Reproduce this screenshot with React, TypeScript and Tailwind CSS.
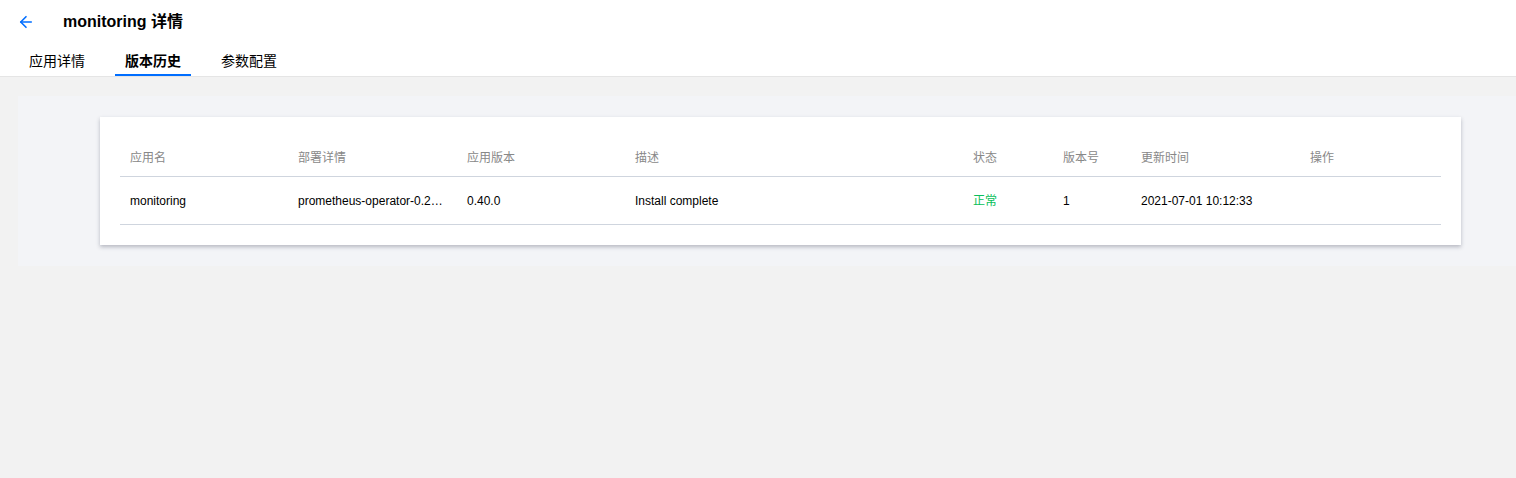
import { ArrowLeft } from "lucide-react";

const columns = [
  { key: "name", label: "应用名", width: "w-[168px]" },
  { key: "deploy", label: "部署详情", width: "w-[169px]" },
  { key: "version", label: "应用版本", width: "w-[168px]" },
  { key: "desc", label: "描述", width: "w-[338px]" },
  { key: "status", label: "状态", width: "w-[90px]" },
  { key: "rev", label: "版本号", width: "w-[78px]" },
  { key: "time", label: "更新时间", width: "w-[169px]" },
  { key: "ops", label: "操作", width: "" },
];

const tabs = ["应用详情", "版本历史", "参数配置"];

export default function App() {
  return (
    <div
      className="min-h-[478px] bg-[#f2f2f2] text-[#000]"
      style={{ fontFamily: '"Liberation Sans", "Noto Sans CJK SC", sans-serif' }}
    >
      <header className="bg-white border-b border-[#e5e5e5]">
        <div className="flex items-center h-[43px] pl-[17px] pt-[1px]">
          <ArrowLeft className="h-[18px] w-[18px] text-[#006eff]" strokeWidth={2.2} />
          <h1 className="ml-[28px] text-[16px] font-bold text-[#000]">monitoring 详情</h1>
        </div>
        <nav className="flex gap-[20px] pl-[19px]">
          {tabs.map((t, i) => (
            <div
              key={t}
              className={
                "px-[10px] h-[33px] pt-[6px] flex items-center text-[14px] border-b-2 " +
                (i === 1 ? "border-[#006eff] font-bold text-[#000]" : "border-transparent text-[#000]")
              }
            >
              {t}
            </div>
          ))}
        </nav>
      </header>

      <main className="pt-[19px] pl-[18px]">
        <section className="bg-[#f3f4f7] py-[21px] pl-[82px] pr-[55px]">
          <div className="bg-white shadow-[0_2px_4px_rgba(54,58,80,0.32)] px-[20px] pt-[20px] pb-[20px]">
            <table className="w-full border-collapse text-[12px] table-fixed">
              <thead>
                <tr className="border-b border-[#cfd5de]">
                  {columns.map((c) => (
                    <th
                      key={c.key}
                      className={"text-left font-normal text-[#888] h-[39px] pl-[10px] pt-[3px] " + c.width}
                    >
                      {c.label}
                    </th>
                  ))}
                </tr>
              </thead>
              <tbody>
                <tr className="border-b border-[#cfd5de]">
                  <td className="h-[48px] pl-[10px] pt-[1px]">monitoring</td>
                  <td className="pl-[10px] pr-[12px] pt-[1px] truncate">prometheus-operator-0.2.0-v1.tgz</td>
                  <td className="pl-[10px] pt-[1px]">0.40.0</td>
                  <td className="pl-[10px] pt-[1px]">Install complete</td>
                  <td className="pl-[10px] pt-[1px] text-[#0abf5b]">正常</td>
                  <td className="pl-[10px] pt-[1px]">1</td>
                  <td className="pl-[10px] pt-[1px]">2021-07-01 10:12:33</td>
                  <td className="pl-[10px]"></td>
                </tr>
              </tbody>
            </table>
          </div>
        </section>
      </main>
    </div>
  );
}
